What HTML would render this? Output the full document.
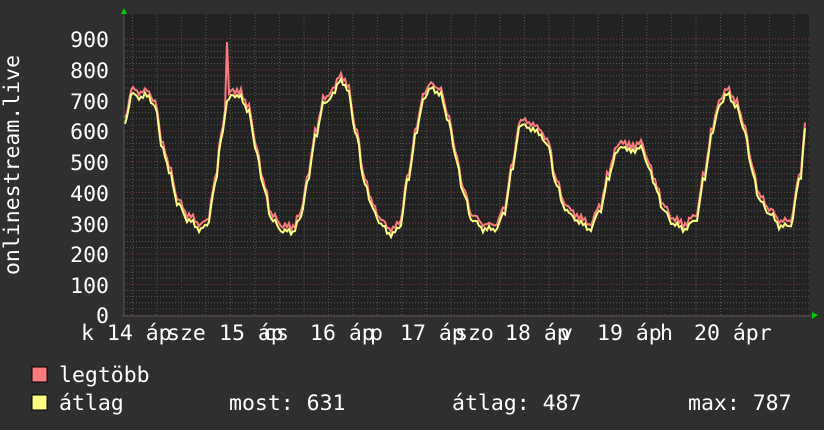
<!DOCTYPE html><html><head><meta charset="utf-8"><style>
body{margin:0;background:#2f2f2f;width:824px;height:430px;overflow:hidden}
svg{display:block}
text{font-family:"DejaVu Sans Mono","Liberation Mono",monospace;font-size:21.5px;fill:#fff}
</style></head><body>
<svg id="s" width="824" height="430" xmlns="http://www.w3.org/2000/svg">
<rect x="124" y="14" width="685" height="302" fill="#222"/>
<g id="grid"></g>
<path id="red" fill="none" stroke="#ff7a7a" stroke-width="2"/>
<path id="yel" fill="none" stroke="#ffff80" stroke-width="2"/>
<line x1="124" y1="12" x2="124" y2="316" stroke="#555"/>
<line x1="122" y1="316" x2="812" y2="316" stroke="#555"/>
<polygon points="121,14 127,14 124,8" fill="#0c0"/>
<polygon points="812,312 812,319 818,315" fill="#0c0"/>
<g text-anchor="end">
<text x="109" y="47">900</text><text x="109" y="78">800</text><text x="109" y="109">700</text>
<text x="109" y="139">600</text><text x="109" y="170">500</text><text x="109" y="201">400</text>
<text x="109" y="232">300</text><text x="109" y="262">200</text><text x="109" y="293">100</text>
<text x="109" y="323">0</text></g>
<text transform="translate(19,165) rotate(-90)" text-anchor="middle">onlinestream.live</text>
<text x="81" y="340">k 14 áp</text><text x="167" y="340">sze</text>
<text x="219" y="340">15 áp</text><text x="263" y="340">cs</text>
<text x="310" y="340">16 áp</text><text x="370" y="340">p</text>
<text x="400" y="340">17 áp</text><text x="455" y="340">szo</text>
<text x="505" y="340">18 áp</text><text x="560" y="340">v</text>
<text x="597" y="340">19 áp</text><text x="660" y="340">h</text>
<text x="694" y="340">20 ápr</text>
<rect x="32" y="367" width="15" height="15" fill="#ff7a7a" stroke="#000"/>
<rect x="32" y="395" width="15" height="15" fill="#ffff80" stroke="#000"/>
<text x="59" y="382">legtöbb</text>
<text x="59" y="410">átlag</text>
<text x="229" y="410">most: 631</text>
<text x="452" y="410">átlag: 487</text>
<text x="688" y="410">max: 787</text>
</svg>
<script>
var g=document.getElementById('grid'),h='';
for(var v=0;v<=900;v+=20){var y=315-v*0.3067;h+='<line x1="124" x2="809" y1="'+y+'" y2="'+y+'" stroke="'+(v%100==0?'#7a3a3a':'#555')+'" stroke-dasharray="1,2"/>';}
for(var x=132.5;x<809;x+=24.5){var maj=Math.abs(((x-181)/98)-Math.round((x-181)/98))<0.05;h+='<line y1="14" y2="316" x1="'+x+'" x2="'+x+'" stroke="'+(maj?'#7a3a3a':'#555')+'" stroke-dasharray="1,2"/>';}
g.innerHTML=h;
var k=[[125,640],[132,730],[140,720],[148,725],[155,690],[162,560],[170,470],[178,370],[188,320],[200,290],[207,300],[215,430],[222,600],[227,700],[232,730],[240,720],[248,680],[256,550],[264,420],[272,320],[282,285],[292,280],[300,320],[308,450],[316,600],[324,700],[334,730],[340,780],[348,740],[356,600],[364,450],[372,360],[382,300],[392,270],[400,300],[408,450],[416,600],[424,720],[432,750],[440,730],[448,650],[456,520],[464,400],[472,320],[484,290],[496,290],[504,340],[512,480],[520,630],[530,620],[540,600],[548,560],[556,440],[564,360],[576,320],[590,290],[600,350],[608,450],[616,540],[624,560],[632,540],[640,560],[648,500],[656,420],[664,350],[672,310],[684,290],[696,320],[704,450],[712,600],[720,700],[728,730],[736,690],[744,620],[752,480],[760,380],[770,340],[780,300],[790,300],[800,450],[806,640]];
function val(x){for(var i=0;i<k.length-1;i++){if(x<=k[i+1][0]){var t=(x-k[i][0])/(k[i+1][0]-k[i][0]);t=(1-Math.cos(t*Math.PI))/2;return k[i][1]+(k[i+1][1]-k[i][1])*t;}}return k[k.length-1][1];}
var r='',yl='';
for(var x=125;x<=806;x+=2){var n=Math.sin(x*1.7)*6+Math.sin(x*0.53)*5;var a=val(x)+n-10;var b=a+10+Math.abs(Math.sin(x*2.3))*10;if(x>=226&&x<=228)b=890;
var ya=315-a*0.3067,yb=315-b*0.3067;r+=(x==125?'M':'L')+x+','+yb.toFixed(1)+' ';yl+=(x==125?'M':'L')+x+','+ya.toFixed(1)+' ';}
document.getElementById('red').setAttribute('d',r);document.getElementById('yel').setAttribute('d',yl);
</script>
</body></html>
